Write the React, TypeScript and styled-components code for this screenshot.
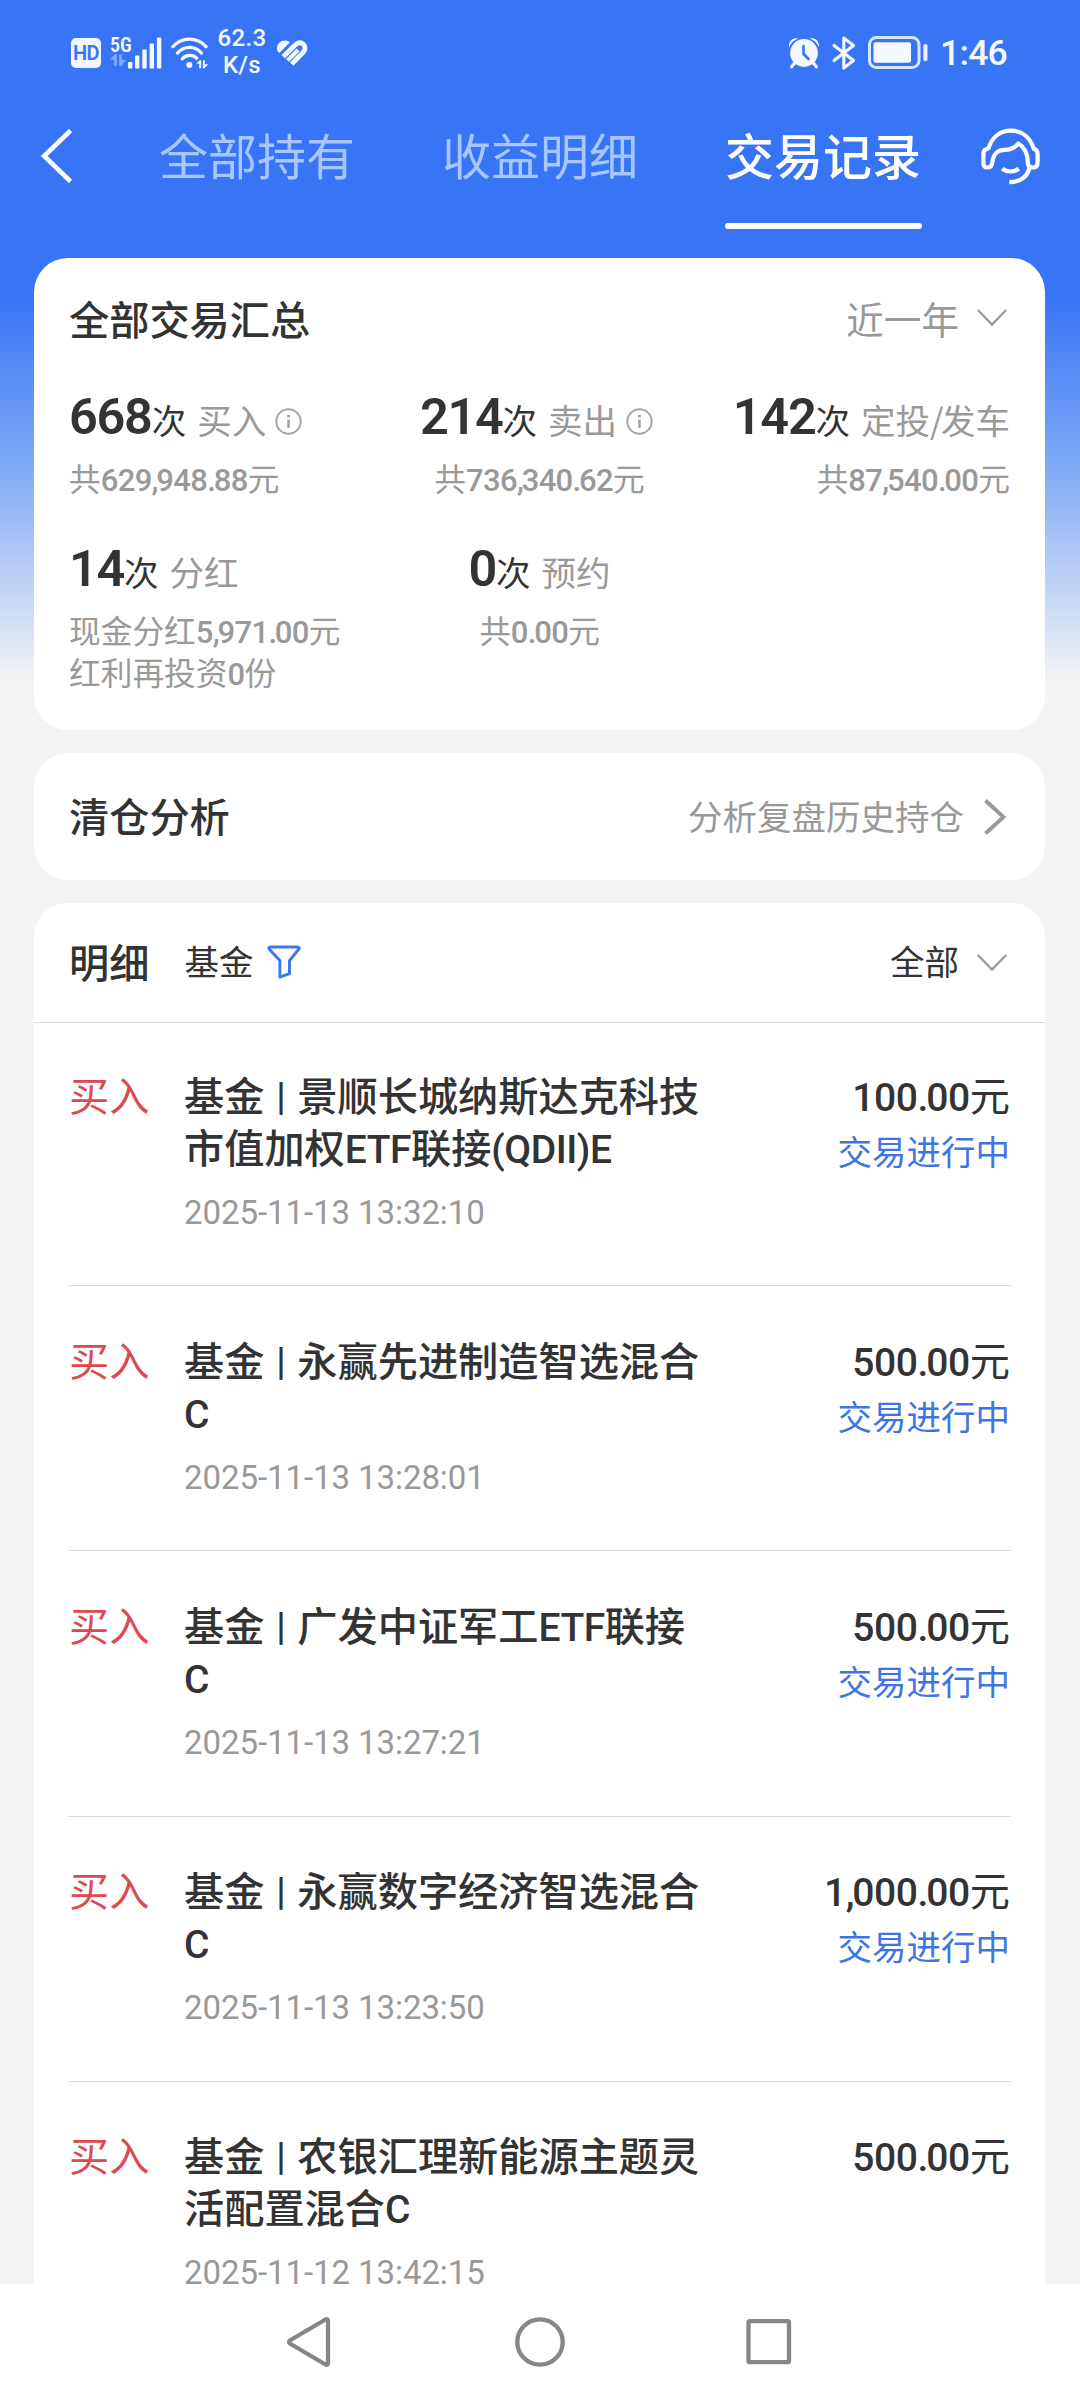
import React from "react";
import styled, { createGlobalStyle } from "styled-components";

const GlobalStyle = createGlobalStyle`
  * { box-sizing: border-box; }
  body { margin: 0; font-family: "Noto Sans CJK SC", "Noto Sans", sans-serif; color: #333; }
  svg { display: block; flex: none; }
`;

const Page = styled.div`
  width: 1080px;
  height: 2400px;
  display: flex;
  flex-direction: column;
  overflow: hidden;
  background: linear-gradient(#3875f6 0, #3875f6 298px, #81abf5 470px, #f4f4f4 683px);
`;

/* ---------- status bar ---------- */

const StatusBar = styled.div`
  height: 104px;
  flex: none;
  display: flex;
  justify-content: space-between;
  align-items: flex-start;
  padding: 29px 72px 0 71px;
  color: #f4f8ff;
  font-family: Roboto, sans-serif;
`;

const StatusGroup = styled.div`
  display: flex;
  align-items: center;
  height: 47px;
`;

const HdBadge = styled.div`
  width: 30px;
  height: 30px;
  border-radius: 5px;
  background: #f1f6ff;
  color: #3875f6;
  font-size: 20px;
  font-weight: 600;
  line-height: 31px;
  text-align: center;
  letter-spacing: -0.5px;
`;

const Network = styled.div`
  width: 18px;
  height: 34px;
  margin-left: 9px;
  font-size: 20px;
  font-weight: 600;
  font-stretch: 75%;
  line-height: 18px;
  white-space: nowrap;
`;

const Speed = styled.div`
  width: 50px;
  margin: -2px 9px 0 8px;
  font-size: 24px;
  line-height: 27px;
  letter-spacing: 0.4px;
  text-align: center;
  font-weight: 500;
`;

const Clock = styled.div`
  width: 68px;
  margin-left: 12px;
  font-size: 35.5px;
  line-height: 46px;
  font-weight: 500;
  letter-spacing: -0.7px;
`;

const Gap = styled.div<{ $w: number }>`
  width: ${(p) => p.$w}px;
  flex: none;
`;

/* ---------- top navigation ---------- */

const TopNav = styled.div`
  height: 154px;
  flex: none;
  display: flex;
  align-items: flex-start;
  padding: 15px 38px 0 40px;
`;

const BackButton = styled.div`
  width: 34px;
  padding-top: 10px;
`;

const Tabs = styled.div`
  display: flex;
  flex: 1;
  gap: 86px;
  padding-left: 85px;
`;

const Tab = styled.div<{ $active?: boolean }>`
  width: 197px;
  font-size: 49px;
  line-height: 70px;
  white-space: nowrap;
  font-weight: ${(p) => (p.$active ? 500 : 400)};
  color: ${(p) => (p.$active ? "#fff" : "#a6c7ff")};
  &::after {
    content: "";
    display: block;
    height: 6px;
    margin-top: 34px;
    border-radius: 3px;
    background: ${(p) => (p.$active ? "#fff" : "transparent")};
  }
`;

const ServiceButton = styled.div`
  width: 62px;
  padding-top: 8px;
`;

/* ---------- cards ---------- */

const Content = styled.div`
  height: 2026px;
  flex: none;
  display: flex;
  flex-direction: column;
  gap: 23px;
  padding: 0 35px 0 34px;
  overflow: hidden;
`;

const Card = styled.section<{ $h?: number; $open?: boolean }>`
  flex: none;
  height: ${(p) => (p.$h ? `${p.$h}px` : "auto")};
  background: #fff;
  border-radius: ${(p) => (p.$open ? "34px 34px 0 0" : "34px")};
`;

const SummaryCard = styled(Card)`
  padding: 29px 35px 0;
`;

const LinkCard = styled(Card)`
  display: flex;
  align-items: center;
  justify-content: space-between;
  padding: 0 35px;
`;

const CardHead = styled.div`
  display: flex;
  align-items: center;
  justify-content: space-between;
  height: 61px;
`;

const Title = styled.h2`
  margin: 0;
  font-size: 40.2px;
  font-weight: 500;
  line-height: 60px;
`;

const Picker = styled.div<{ $size: number; $dark?: boolean }>`
  display: flex;
  align-items: center;
  gap: 18px;
  padding-right: 3px;
  font-size: ${(p) => p.$size}px;
  line-height: 56px;
  color: ${(p) => (p.$dark ? "#333" : "#999")};
`;

const Stats = styled.div`
  display: grid;
  grid-template-columns: repeat(3, 1fr);
  row-gap: 42px;
  margin-top: 41px;
`;

const Stat = styled.div<{ $align: string }>`
  text-align: ${(p) => p.$align};
  white-space: nowrap;
`;

const StatHead = styled.div<{ $align: string }>`
  display: flex;
  justify-content: ${(p) => (p.$align === "left" ? "flex-start" : p.$align === "right" ? "flex-end" : "center")};
  height: 60px;
  font-size: 34.5px;
  line-height: 60px;
`;

const Count = styled.span`
  font-family: Roboto, sans-serif;
  font-size: 50.5px;
  font-weight: 600;
  line-height: 1;
  letter-spacing: -1.3px;
`;

const StatName = styled.span`
  margin-left: 11px;
  color: #999;
`;

const Slash = styled.span`
  letter-spacing: -2.5px;
`;

const InfoWrap = styled.span`
  display: flex;
  align-items: center;
  margin: 0 6px 0 9px;
  padding-top: 5px;
`;

const StatSub = styled.div`
  margin-top: 7px;
  font-size: 31.7px;
  line-height: 42.5px;
  color: #999;
`;

const Punct = styled.span`
  letter-spacing: -2.2px;
`;

const SubNum = styled.span`
  font-family: Roboto, sans-serif;
  font-size: 31px;
  font-weight: 500;
  line-height: 1;
  letter-spacing: -0.65px;
`;

const LinkHint = styled.div`
  display: flex;
  align-items: center;
  gap: 19px;
  padding-right: 3px;
  font-size: 34.5px;
  line-height: 50px;
  color: #999;
`;

const Raised = styled.span<{ $by: number }>`
  padding-bottom: ${(p) => p.$by}px;
`;

/* ---------- record list ---------- */

const ListHead = styled.div`
  display: flex;
  align-items: center;
  height: 120px;
  padding: 0 35px;
  border-bottom: 1px solid #dadada;
`;

const Filter = styled.div`
  display: flex;
  flex: 1;
  align-items: center;
  gap: 14px;
  margin-left: 35px;
  padding-bottom: 2px;
  font-size: 34.5px;
  line-height: 50px;
`;

const Record = styled.article`
  display: flex;
  height: 265.3px;
  margin: 0 34px;
  padding: 46.5px 1px 0;
  border-bottom: 1px solid #dedede;
  &:first-of-type {
    height: 263px;
    padding-top: 45px;
  }
`;

const Kind = styled.div`
  width: 115px;
  flex: none;
  font-size: 40.2px;
  line-height: 52px;
  color: #dc4a4f;
`;

const Body = styled.div`
  flex: 1;
`;

const FundName = styled.div`
  font-size: 40.2px;
  font-weight: 500;
  line-height: 52px;
  white-space: pre;
`;

const Latin = styled.span`
  font-family: Roboto, sans-serif;
  font-size: 39px;
  line-height: 1;
  letter-spacing: -0.5px;
`;

const Divider = styled.span`
  font-family: Roboto, sans-serif;
  font-size: 38px;
  font-stretch: 75%;
  line-height: 1;
  vertical-align: 1px;
  word-spacing: 3px;
`;

const Stamp = styled.div`
  margin-top: 21px;
  font-family: Roboto, sans-serif;
  font-size: 33px;
  line-height: 40px;
  letter-spacing: -0.07px;
  color: #999;
`;

const Side = styled.div`
  flex: none;
  text-align: right;
`;

const Amount = styled.div`
  font-size: 40.2px;
  line-height: 52px;
`;

const AmountNum = styled(Latin)`
  font-weight: 500;
  letter-spacing: -0.4px;
`;

const State = styled.div`
  margin-top: 7px;
  font-size: 34.5px;
  line-height: 46px;
  color: #3f74e4;
`;

const SystemNav = styled.div`
  flex: none;
  height: 116px;
  display: flex;
  justify-content: center;
  gap: 180px;
  padding-top: 33px;
  background: #fff;
`;

/* ---------- icons ---------- */

const MiniArrows = () => (
  <svg width="16" height="12" viewBox="0 0 14 10" fill="#f4f8ff" opacity="0.4">
    <path d="M0 4.800 4 0h2v10H3.600V4.800zM8 0h2.400v5H14l-4 5H8z" />
  </svg>
);

const Signal = () => (
  <svg width="34" height="32" viewBox="0 0 34 32" fill="#f4f8ff">
    <rect x="0" y="25" width="4.4" height="6.5" rx="1" />
    <rect x="7" y="18.5" width="4.4" height="13" rx="1" />
    <rect x="14.3" y="12.5" width="4.4" height="19" rx="1" />
    <rect x="21.6" y="6.5" width="4.4" height="25" rx="1" />
    <rect x="28.9" y="0.5" width="4.4" height="31" rx="1" />
  </svg>
);

const Wifi = () => (
  <svg width="38" height="32" viewBox="0 0 38 32" fill="none" stroke="#f4f8ff" strokeWidth="3.3" strokeLinecap="round">
    <path d="M2 9.600C11-.4 26-.4 35 9.600M6.600 16c6.600-7.400 17.200-7.400 23.800 0M11.300 21.800c4-4.400 10.400-4.400 14.400-.6" />
    <circle cx="18.300" cy="28" r="3" fill="#f4f8ff" stroke="none" />
    <path d="M25.200 26.800 28.800 23.200h1.400v8h-2v-4.400zM32 23.200h1.800v4h3.400l-3.700 4H32z" fill="#f4f8ff" stroke="none" />
  </svg>
);

const HealthHeart = () => (
  <svg width="32" height="28" viewBox="0 0 32 28" fill="none">
    <path d="M1.800 12.700C-1.600 5.500 6.400-1.800 14 3.200L3.600 13.700z" fill="#f4f8ff" />
    <path d="M7.300 17.700 18.300 6.700c3-3 6.300-4 9-1.400s1.900 6-.8 8.700L15.700 25" stroke="#f4f8ff" strokeWidth="4.800" />
    <path d="M11.600 21.400 22 11" stroke="#f4f8ff" strokeWidth="4" />
  </svg>
);

const Alarm = () => (
  <svg width="32" height="32" viewBox="0 0 32 32">
    <circle cx="16" cy="16" r="13.900" fill="#f4f8ff" />
    <path d="M1 10C.5 4 5 .5 10 1.500 6 3 3 6 1 10zM31 10c.5-6-4-9.500-9-8.500 4 1.500 7 4.500 9 8.500z" fill="#f4f8ff" />
    <path d="M6.500 26 3.500 30M25.500 26l3 4" stroke="#f4f8ff" strokeWidth="3" strokeLinecap="round" />
    <path d="M15.500 9v8l5 5" stroke="#3875f6" strokeWidth="2.600" fill="none" strokeLinecap="round" />
  </svg>
);

const Bluetooth = () => (
  <svg width="24" height="34" viewBox="0 0 24 34" fill="none" stroke="#f4f8ff" strokeWidth="3.100" strokeLinejoin="round" strokeLinecap="round">
    <path d="M2 9.500 21.500 24.500 11.800 32V2l9.700 7.500L2 24.500" />
  </svg>
);

const Battery = () => (
  <svg width="61" height="33" viewBox="0 0 61 33">
    <rect x="2.500" y="1.500" width="49.500" height="30" rx="7" fill="none" stroke="#d9e6ff" strokeWidth="3" />
    <rect x="6.500" y="6.300" width="37.500" height="20.400" rx="2" fill="#f4f8ff" />
    <rect x="56.300" y="8" width="4.200" height="17.300" rx="2" fill="#e6efff" />
  </svg>
);

const BackIcon = () => (
  <svg width="34" height="54" viewBox="0 0 34 54" fill="none" stroke="#fff" strokeWidth="4.600">
    <path d="M30.500 1.500 4.200 27l26.300 25.500" />
  </svg>
);

const Headset = () => (
  <svg width="62" height="60" viewBox="0 0 62 60" fill="none" stroke="#fff" strokeWidth="4.200" strokeLinecap="butt" strokeLinejoin="round">
    <path d="M8 22.500C11.500 10.500 20 3.600 31 3.600S50.500 10.500 54 22.500" />
    <path d="M8.500 21.600C4.500 22 3.400 24.200 3.400 27v8.500c0 3.500 1.200 5 4 5 3.200 0 4.500-1.400 4.900-5 .7-8 5.500-12.700 12-12.700 6 0 10.500-1.800 14-6.300 6 3.500 9.600 9.500 9.600 19.500 0 3 1.500 4.500 4.900 4.500 3.200 0 4.800-1.700 4.800-5V27c0-3.200-1.400-5-4.900-5.400" />
    <path d="M49.700 38.500c-.7 10-8.700 16.800-20.400 16.700" />
    <path d="M22.200 41.800c4.800 3.600 11.600 3.600 16.600 0" />
  </svg>
);

const ChevronDown = () => (
  <svg width="30" height="18" viewBox="0 0 30 18" fill="none" stroke="#999" strokeWidth="2.200">
    <path d="M.8.900 15 15.600 29.200.900" />
  </svg>
);

const ChevronRight = () => (
  <svg width="24" height="36" viewBox="0 0 24 36" fill="none" stroke="#999" strokeWidth="3.800">
    <path d="M2.500 1.500 20.500 18l-18 16.500" />
  </svg>
);

const Info = () => (
  <svg width="27" height="27" viewBox="0 0 27 27" fill="none" stroke="#a6a6a6" strokeWidth="2">
    <circle cx="13.500" cy="13.500" r="12.200" />
    <path d="M13.500 11.500V20M13.500 6.800v2.600" strokeWidth="2.600" />
  </svg>
);

const Funnel = () => (
  <svg width="34" height="34" viewBox="0 0 34 34" fill="none" stroke="#3f79ee" strokeWidth="3" strokeLinejoin="round">
    <path d="M3.200 1.900h27.600c1.300 0 1.700 1.300.9 2.300L22.500 15.600V28.600l-9.600 3.500V15.600L2.300 4.200C1.400 3.200 1.900 1.900 3.200 1.900z" />
  </svg>
);

const NavIcon = ({ children }: { children: React.ReactNode }) => (
  <svg width="50" height="50" viewBox="0 0 50 50" fill="none" stroke="#868686" strokeWidth="4.300" strokeLinejoin="round">
    {children}
  </svg>
);

/* ---------- data ---------- */

type Align = "left" | "center" | "right";

const stats: { count: number; name: string; align: Align; info?: boolean; sub: string[] }[] = [
  { count: 668, name: "买入", align: "left", info: true, sub: ["共629,948.88元"] },
  { count: 214, name: "卖出", align: "center", info: true, sub: ["共736,340.62元"] },
  { count: 142, name: "定投/发车", align: "right", sub: ["共87,540.00元"] },
  { count: 14, name: "分红", align: "left", sub: ["现金分红5,971.00元", "红利再投资0份"] },
  { count: 0, name: "预约", align: "center", sub: ["共0.00元"] },
];

const records = [
  { lines: ["景顺长城纳斯达克科技", "市值加权ETF联接(QDII)E"], time: "2025-11-13 13:32:10", amount: "100.00", state: "交易进行中" },
  { lines: ["永赢先进制造智选混合", "C"], time: "2025-11-13 13:28:01", amount: "500.00", state: "交易进行中" },
  { lines: ["广发中证军工ETF联接", "C"], time: "2025-11-13 13:27:21", amount: "500.00", state: "交易进行中" },
  { lines: ["永赢数字经济智选混合", "C"], time: "2025-11-13 13:23:50", amount: "1,000.00", state: "交易进行中" },
  { lines: ["农银汇理新能源主题灵", "活配置混合C"], time: "2025-11-12 13:42:15", amount: "500.00", state: "" },
];

/** Wraps every run of characters matched by `pattern` in the given span. */
const wrapRuns = (text: string, pattern: RegExp, Wrap: React.ElementType) =>
  text.split(pattern).map((part, i) => (i % 2 ? <Wrap key={i}>{part}</Wrap> : part));

/** Digits with tightened separators. */
const tightNumber = (text: string) => wrapRuns(text, /([.,])/, Punct);

const SubFigure = ({ children }: { children: string }) => <SubNum>{tightNumber(children)}</SubNum>;

export default function App() {
  return (
    <>
      <GlobalStyle />
      <Page>
        <StatusBar>
          <StatusGroup>
            <HdBadge>HD</HdBadge>
            <Network>
              5G
              <MiniArrows />
            </Network>
            <Signal />
            <Gap $w={9} />
            <Wifi />
            <Speed>62.3 K/s</Speed>
            <HealthHeart />
          </StatusGroup>
          <StatusGroup>
            <Alarm />
            <Gap $w={12} />
            <Bluetooth />
            <Gap $w={11} />
            <Battery />
            <Clock>1:46</Clock>
          </StatusGroup>
        </StatusBar>

        <TopNav>
          <BackButton>
            <BackIcon />
          </BackButton>
          <Tabs>
            <Tab>全部持有</Tab>
            <Tab>收益明细</Tab>
            <Tab $active>交易记录</Tab>
          </Tabs>
          <ServiceButton>
            <Headset />
          </ServiceButton>
        </TopNav>

        <Content>
          <SummaryCard $h={472}>
            <CardHead>
              <Title>全部交易汇总</Title>
              <Picker $size={37.6}>
                近一年
                <ChevronDown />
              </Picker>
            </CardHead>
            <Stats>
              {stats.map((s) => (
                <Stat key={s.name} $align={s.align}>
                  <StatHead $align={s.align}>
                    <span>
                      <Count>{s.count}</Count>次
                    </span>
                    <StatName>{wrapRuns(s.name, /(\/)/, Slash)}</StatName>
                    {s.info && (
                      <InfoWrap>
                        <Info />
                      </InfoWrap>
                    )}
                  </StatHead>
                  <StatSub>
                    {s.sub.map((line) => (
                      <div key={line}>{wrapRuns(line, /([\d.,]+)/, SubFigure)}</div>
                    ))}
                  </StatSub>
                </Stat>
              ))}
            </Stats>
          </SummaryCard>

          <LinkCard $h={127}>
            <Raised as={Title} $by={3}>
              清仓分析
            </Raised>
            <LinkHint>
              <Raised $by={4}>分析复盘历史持仓</Raised>
              <ChevronRight />
            </LinkHint>
          </LinkCard>

          <Card $open>
            <ListHead>
              <Raised as={Title} $by={3}>
                明细
              </Raised>
              <Filter>
                <Raised $by={4}>基金</Raised>
                <Funnel />
              </Filter>
              <Picker $size={34.5} $dark>
                <Raised $by={5}>全部</Raised>
                <ChevronDown />
              </Picker>
            </ListHead>
            {records.map((r) => (
              <Record key={r.time}>
                <Kind>买入</Kind>
                <Body>
                  {r.lines.map((line, i) => (
                    <FundName key={line}>
                      {i === 0 && (
                        <>
                          基金<Divider> | </Divider>
                        </>
                      )}
                      {wrapRuns(line, /([A-Z()]+)/, Latin)}
                    </FundName>
                  ))}
                  <Stamp>{r.time}</Stamp>
                </Body>
                <Side>
                  <Amount>
                    <AmountNum>{tightNumber(r.amount)}</AmountNum>元
                  </Amount>
                  <State>{r.state}</State>
                </Side>
              </Record>
            ))}
          </Card>
        </Content>

        <SystemNav>
          <NavIcon>
            <path d="M4.800 23.500Q3.200 25 4.800 26.500L40.500 47.500Q43 48.500 43 46V4Q43 1.500 40.500 2.500z" />
          </NavIcon>
          <NavIcon>
            <circle cx="25" cy="25" r="22.700" />
          </NavIcon>
          <NavIcon>
            <rect x="3.500" y="4.200" width="40.500" height="41" rx="1.500" />
          </NavIcon>
        </SystemNav>
      </Page>
    </>
  );
}
